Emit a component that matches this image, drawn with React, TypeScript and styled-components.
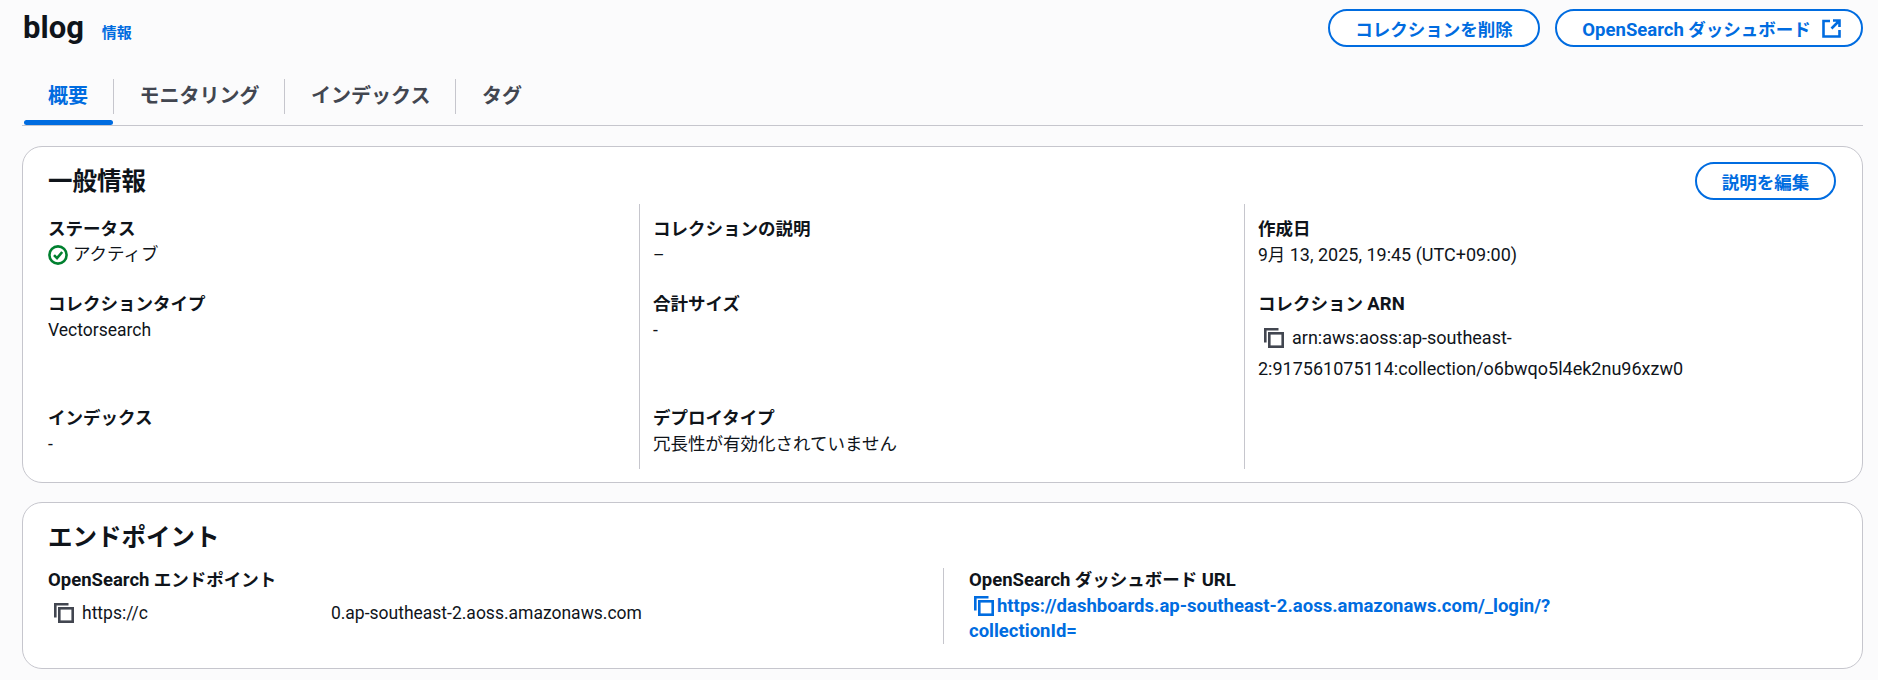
import React from "react";
import styled, { createGlobalStyle } from "styled-components";

const Global = createGlobalStyle`
  html, body { margin: 0; padding: 0; background: #fbfbfc; }
  body { font-family: Roboto, "Noto Sans CJK JP", sans-serif; color: #0f141a; font-size: 17.5px; }
`;

const Page = styled.div`
  padding: 9px 15px 0 22px;
  width: 1841px;
  box-sizing: content-box;
`;

const Header = styled.header`
  display: flex;
  align-items: center;
  justify-content: space-between;
  height: 38px;
`;

const TitleGroup = styled.div`
  display: flex;
  align-items: baseline;
  gap: 18px;
  padding-left: 1px;
`;

const Title = styled.h1`
  margin: 0;
  font-size: 31px;
  font-weight: 700;
  line-height: 40px;
`;

const InfoLink = styled.a`
  font-size: 15px;
  font-weight: 700;
  color: #006ce0;
`;

const Actions = styled.div`
  display: flex;
  gap: 15px;
`;

const Button = styled.button<{ $w: number }>`
  display: inline-flex;
  align-items: center;
  justify-content: center;
  gap: 11px;
  height: 38px;
  width: ${(p) => p.$w}px;
  padding: 0;
  border: 2.5px solid #006ce0;
  border-radius: 20px;
  background: #fff;
  color: #006ce0;
  font: 700 17.5px Roboto, "Noto Sans CJK JP", sans-serif;
`;

const DashboardButton = styled(Button)`
  padding-left: 5px;
`;

const Latin = styled.span<{ $size: number }>`
  font-size: ${(p) => p.$size}px;
`;

const TabList = styled.nav`
  display: flex;
  margin-top: 32px;
  height: 47px;
  box-sizing: border-box;
  border-bottom: 1px solid #c6c6cd;
`;

const Tab = styled.div<{ $active?: boolean }>`
  position: relative;
  height: 35px;
  display: flex;
  align-items: center;
  box-sizing: border-box;
  padding: 0 24.5px 4px 26px;
  font-size: 20px;
  font-weight: 700;
  color: ${(p) => (p.$active ? "#006ce0" : "#424650")};
  &:not(:last-child) { border-right: 1px solid #c6c6cd; }
  ${(p) =>
    p.$active
      ? `&::after { content: ""; position: absolute; left: 2px; right: 0; top: 41px; height: 5px; border-radius: 3px; background: #006ce0; }`
      : ""}
`;

const Card = styled.section<{ $mt: number; $h: number }>`
  margin-top: ${(p) => p.$mt}px;
  height: ${(p) => p.$h}px;
  box-sizing: border-box;
  background: #fff;
  border: 1px solid #c6c6cd;
  border-radius: 20px;
  padding: 15px 26px 0 25px;
`;

const CardHead = styled.div`
  display: flex;
  align-items: center;
  justify-content: space-between;
  height: 38px;
`;

const CardTitle = styled.h2`
  margin: 0;
  font-size: 24.5px;
  font-weight: 700;
  line-height: 38px;
  padding-top: 2px;
`;

const InfoGrid = styled.div`
  display: grid;
  grid-template-columns: 591px 605px 1fr;
  margin-top: 4px;
`;

const Cell = styled.div<{ $first?: boolean; $last?: boolean; $divided?: boolean }>`
  padding-top: ${(p) => (p.$first ? 13 : 0)}px;
  padding-bottom: ${(p) => (p.$last ? 12 : 24)}px;
  padding-left: ${(p) => (p.$divided ? 13 : 0)}px;
  border-left: ${(p) => (p.$divided ? "1px solid #c6c6cd" : "none")};
`;

const Label = styled.div`
  font-weight: 700;
  line-height: 25px;
  font-size: 17.5px;
`;

const Value = styled.div`
  line-height: 26px;
  font-size: 17.5px;
`;

const Status = styled.div`
  display: flex;
  align-items: center;
  gap: 5px;
  line-height: 25px;
`;

const CopyValue = styled.div<{ $size?: number }>`
  line-height: 31px;
  padding-top: 5px;
  margin-bottom: -2px;
  font-size: ${(p) => p.$size ?? 17.5}px;
`;

const IconWrap = styled.span`
  display: inline-block;
  vertical-align: -4px;
  margin: 0 8px 0 6px;
  line-height: 0;
`;

const EndpointGrid = styled.div`
  display: grid;
  grid-template-columns: 895px 1fr;
  margin-top: 12px;
  height: 76px;
`;

const EndpointCell = styled.div<{ $divided?: boolean }>`
  padding-left: ${(p) => (p.$divided ? 25 : 0)}px;
  border-left: ${(p) => (p.$divided ? "1px solid #c6c6cd" : "none")};
`;

const RedactedGap = styled.span`
  display: inline-block;
  width: 183px;
`;

const UrlLink = styled.a`
  display: block;
  color: #006ce0;
  font-weight: 700;
  font-size: 18.5px;
  line-height: 25px;
  margin-top: 1px;
`;

const LinkIcon = styled.span`
  display: inline-block;
  vertical-align: -4px;
  margin: 0 3px 0 5px;
  line-height: 0;
`;

const CopyIcon = ({ color = "#424650" }: { color?: string }) => (
  <svg width="20" height="20" viewBox="0 0 20 20" fill="none" stroke={color} strokeWidth="2.6">
    <path d="M1.3 14.5V1.3H14.5" />
    <rect x="5.3" y="5.3" width="13.4" height="13.4" />
  </svg>
);

const CheckIcon = () => (
  <svg width="20" height="20" viewBox="0 0 20 20" fill="none" stroke="#00802f" strokeWidth="2.6">
    <circle cx="10" cy="10" r="8.6" />
    <path d="M6 10.2l3 3 5.2-6.2" />
  </svg>
);

const ExternalIcon = () => (
  <svg width="19" height="19" viewBox="0 0 19 19" fill="none" stroke="#006ce0" strokeWidth="2.6">
    <path d="M8 2H1.5v15.5H17.5V11" />
    <path d="M11 1.5h6.5V8M17 2l-7.5 7.5" />
  </svg>
);

export default function App() {
  return (
    <>
      <Global />
      <Page>
        <Header>
          <TitleGroup>
            <Title>blog</Title>
            <InfoLink>情報</InfoLink>
          </TitleGroup>
          <Actions>
            <Button $w={212}>コレクションを削除</Button>
            <DashboardButton $w={308}>
              <span>
                <Latin $size={18.5}>OpenSearch</Latin> ダッシュボード
              </span>
              <ExternalIcon />
            </DashboardButton>
          </Actions>
        </Header>
        <TabList>
          <Tab $active>概要</Tab>
          <Tab>モニタリング</Tab>
          <Tab>インデックス</Tab>
          <Tab>タグ</Tab>
        </TabList>
        <Card $mt={20} $h={337}>
          <CardHead>
            <CardTitle>一般情報</CardTitle>
            <Button $w={141}>説明を編集</Button>
          </CardHead>
          <InfoGrid>
            <Cell $first>
              <Label>ステータス</Label>
              <Status>
                <CheckIcon />
                アクティブ
              </Status>
            </Cell>
            <Cell $first $divided>
              <Label>コレクションの説明</Label>
              <Value>–</Value>
            </Cell>
            <Cell $first $divided>
              <Label>作成日</Label>
              <Value>
                9月 <Latin $size={18}>13, 2025, 19:45 (UTC+09:00)</Latin>
              </Value>
            </Cell>
            <Cell>
              <Label>コレクションタイプ</Label>
              <Value>Vectorsearch</Value>
            </Cell>
            <Cell $divided>
              <Label>合計サイズ</Label>
              <Value>-</Value>
            </Cell>
            <Cell $divided>
              <Label>
                コレクション <Latin $size={18.5}>ARN</Latin>
              </Label>
              <CopyValue $size={18}>
                <IconWrap>
                  <CopyIcon />
                </IconWrap>
                arn:aws:aoss:ap-southeast-
                <br />
                2:917561075114:collection/o6bwqo5l4ek2nu96xzw0
              </CopyValue>
            </Cell>
            <Cell $last>
              <Label>インデックス</Label>
              <Value>-</Value>
            </Cell>
            <Cell $last $divided>
              <Label>デプロイタイプ</Label>
              <Value>冗長性が有効化されていません</Value>
            </Cell>
            <Cell $last $divided />
          </InfoGrid>
        </Card>
        <Card $mt={19} $h={167}>
          <CardHead>
            <CardTitle>エンドポイント</CardTitle>
          </CardHead>
          <EndpointGrid>
            <EndpointCell>
              <Label>
                <Latin $size={18.5}>OpenSearch</Latin> エンドポイント
              </Label>
              <CopyValue>
                <IconWrap>
                  <CopyIcon />
                </IconWrap>
                https://c
                <RedactedGap />
                0.ap-southeast-2.aoss.amazonaws.com
              </CopyValue>
            </EndpointCell>
            <EndpointCell $divided>
              <Label>
                <Latin $size={18.5}>OpenSearch</Latin> ダッシュボード <Latin $size={18.5}>URL</Latin>
              </Label>
              <UrlLink>
                <LinkIcon>
                  <CopyIcon color="#006ce0" />
                </LinkIcon>
                https://dashboards.ap-southeast-2.aoss.amazonaws.com/_login/?
                <br />
                collectionId=
              </UrlLink>
            </EndpointCell>
          </EndpointGrid>
        </Card>
      </Page>
    </>
  );
}
